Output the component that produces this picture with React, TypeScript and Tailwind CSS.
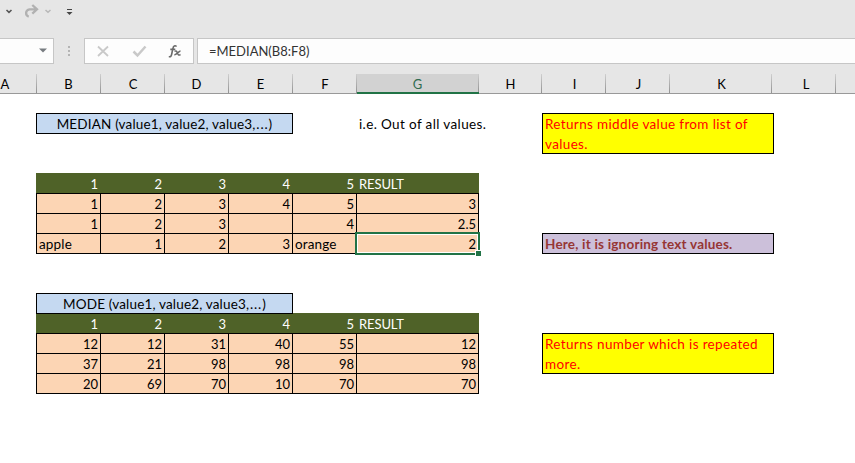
import React from "react";

const columns = [
  { name: "A", width: "w-[37px]", pad: "pr-[26px]" },
  { name: "B", width: "w-[64px]", pad: "" },
  { name: "C", width: "w-[64px]", pad: "pl-px" },
  { name: "D", width: "w-[64px]", pad: "" },
  { name: "E", width: "w-[64px]", pad: "" },
  { name: "F", width: "w-[64px]", pad: "pl-px" },
  { name: "G", width: "w-[122px]", pad: "" },
  { name: "H", width: "w-[63px]", pad: "pl-px" },
  { name: "I", width: "w-[64px]", pad: "pl-[2px]" },
  { name: "J", width: "w-[64px]", pad: "pl-[2px]" },
  { name: "K", width: "w-[102px]", pad: "pl-[2px]" },
  { name: "L", width: "w-[64px]", pad: "pl-[5px]" },
];

function QuickAccess() {
  return (
    <div className="h-[38px]">
      <svg width="90" height="38" fill="none">
        <path d="M6.5 10l2.5 2.3 2.5-2.3" stroke="#555" strokeWidth="1.6" />
        <path
          d="M36.500 9.300H29.500a4.300 3.900 0 0 0-.8 7.400M32.300 5l4.700 4.300L32.300 13.600"
          stroke="#b1b1b1"
          strokeWidth="2.300"
        />
        <path d="M45.500 10l2.500 2.300 2.500-2.300" stroke="#b8b8b8" strokeWidth="1.500" />
        <path d="M67 9.500h5" stroke="#444" strokeWidth="1" />
        <path d="M66.500 12h6l-3 3z" fill="#444" />
      </svg>
    </div>
  );
}

function FormulaBar() {
  return (
    <div className="flex h-[26px]">
      <div className="flex w-[54px] items-center justify-end border-y border-r border-[#c6c6c6] bg-[#fdfdfd] pr-[6px] pb-[2px]">
        <svg width="8" height="5">
          <path d="M0 0.500h8L4 4.500z" fill="#777c80" />
        </svg>
      </div>
      <div className="flex w-[30px] flex-col items-center justify-center gap-[2px]">
        <i className="size-[2px] bg-[#b4b4b4]" />
        <i className="size-[2px] bg-[#b4b4b4]" />
        <i className="size-[2px] bg-[#b4b4b4]" />
      </div>
      <div className="w-[110px] border border-[#c6c6c6] bg-[#fdfdfd]">
        <svg width="108" height="24" fill="none">
          <path d="M13 7.500l10 9.500M23 7.500L13 17" stroke="#c9c9c9" strokeWidth="1.800" />
          <path d="M48.500 12.500l4 4L60.500 7.500" stroke="#c9c9c9" strokeWidth="2.500" />
          <path
            d="M91.600 7.500C90 6.100 88.400 6.800 88 9l-1.400 6.500c-.4 2-1.400 2.700-2.700 1.800M85.300 10.400h5"
            stroke="#6a6a6a"
            strokeWidth="1.600"
          />
          <path
            d="M89.500 12.300c2-1 2.200 0 3 2s1.300 2.300 3 1.200M95.500 12c-1.800 0-4 4-6.200 3.700"
            stroke="#6a6a6a"
            strokeWidth="1.500"
          />
        </svg>
      </div>
      <div className="ml-[3px] flex flex-1 items-center border-y border-l border-[#c6c6c6] bg-[#fdfdfd] pt-px pl-[11px] text-[#333]">
        <span>=MEDIAN(B8:F8)</span>
      </div>
    </div>
  );
}

function ColumnHeaders() {
  return (
    <div className="mt-[10px] flex h-[20px] overflow-hidden">
      {columns.map((c) => {
        const active = c.name === "G";
        return (
          <div
            key={c.name}
            className={`flex shrink-0 ${c.width} ${active ? "border-b-2 border-[#217346] bg-[#d2d2d2] text-[#2f6b4f]" : "border-b border-[#999] text-black"}`}
          >
            <span className={`flex-1 text-center leading-[20px] ${c.pad}`}>{c.name}</span>
            <span className="w-px bg-linear-to-b from-[#cfcfcf] to-[#929292]" />
          </div>
        );
      })}
      <div className="flex-1 border-b border-[#999]" />
    </div>
  );
}

function HeaderRow() {
  return (
    <div className="grid h-[20px] grid-cols-[65px_64px_64px_64px_64px_122px] bg-[#4f6228] text-white">
      {["1", "2", "3", "4", "5"].map((n) => (
        <span key={n} className="pr-[3px] text-right leading-[22px]">
          {n}
        </span>
      ))}
      <span className="pl-[2px] leading-[22px] tracking-[-0.1px]">RESULT</span>
    </div>
  );
}

function DataRows({ rows, selectLast = false }: { rows: string[][]; selectLast?: boolean }) {
  return (
    <div className="border-t border-l border-black">
      {rows.map((row, r) => (
        <div key={r} className="grid grid-cols-[64px_64px_64px_64px_64px_122px] grid-rows-[20px]">
          {row.map((v, c) => {
            const selected = selectLast && r === rows.length - 1 && c === row.length - 1;
            const isText = /[a-z]/.test(v);
            return (
              <div
                key={c}
                className={`relative border-r border-b border-black bg-[#fcd5b4] leading-[20px] ${isText ? "pl-[2px] text-[13.5px] tracking-[0.15px]" : "pr-[2px] text-right"}`}
              >
                {v}
                {selected && (
                  <>
                    <div className="absolute -top-[2px] -right-[2px] -bottom-[2px] -left-[2px] border-2 border-[#217346]">
                      <div className="h-full border border-white" />
                    </div>
                    <div className="absolute -right-[3px] -bottom-[3px] size-[6px] border-t border-l border-white bg-[#217346]" />
                  </>
                )}
              </div>
            );
          })}
        </div>
      ))}
    </div>
  );
}

function Title({ name }: { name: string }) {
  return (
    <div className="h-[21px] w-[257px] shrink-0 border border-black bg-[#c5d9f1] text-center text-[13.5px] leading-[21px] tracking-[0.17px]">
      {name} (value1, value2, value3<span className="tracking-[0.9px]">,...</span>)
    </div>
  );
}

const note = "w-[232px] border border-black pl-[2px] text-[13.5px] leading-[20px] whitespace-nowrap";

export default function App() {
  return (
    <div className="flex h-[463px] w-[855px] flex-col overflow-hidden bg-[#e6e6e6] font-[Lato,Carlito,sans-serif] text-[13px] text-black">
      <QuickAccess />
      <FormulaBar />
      <ColumnHeaders />
      <main className="flex-1 bg-white pt-[19px] pl-[36px]">
        <section className="flex h-[180px] gap-[63px]">
          <div className="w-[443px]">
            <div className="flex h-[60px]">
              <Title name="MEDIAN" />
              <span className="ml-[66px] text-[13.5px] leading-[23px] tracking-[0.37px] whitespace-nowrap">
                i.e. Out of all values.
              </span>
            </div>
            <HeaderRow />
            <DataRows
              selectLast
              rows={[
                ["1", "2", "3", "4", "5", "3"],
                ["1", "2", "3", "", "4", "2.5"],
                ["apple", "1", "2", "3", "orange", "2"],
              ]}
            />
          </div>
          <div className="flex flex-col gap-[79px]">
            <div className={`${note} h-[41px] bg-[#ffff00] tracking-[0.35px] text-[#ff0000]`}>
              <div>Returns middle value from list of</div>
              <div>values.</div>
            </div>
            <div className={`${note} h-[21px] bg-[#ccc0da] font-bold tracking-[0.2px] text-[#963634]`}>
              Here, it is ignoring text values.
            </div>
          </div>
        </section>
        <section className="flex gap-[63px]">
          <div className="w-[443px]">
            <div className="h-[20px]">
              <div className="relative z-10">
                <Title name="MODE" />
              </div>
            </div>
            <HeaderRow />
            <DataRows
              rows={[
                ["12", "12", "31", "40", "55", "12"],
                ["37", "21", "98", "98", "98", "98"],
                ["20", "69", "70", "10", "70", "70"],
              ]}
            />
          </div>
          <div className={`${note} mt-[40px] h-[41px] bg-[#ffff00] tracking-[0.35px] text-[#ff0000]`}>
            <div>Returns number which is repeated</div>
            <div>more.</div>
          </div>
        </section>
      </main>
    </div>
  );
}
